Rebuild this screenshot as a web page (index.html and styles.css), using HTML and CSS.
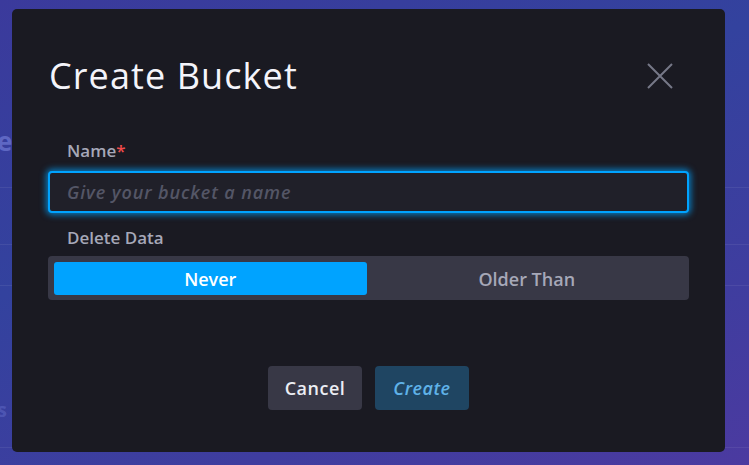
FILE: index.html
```html
<!DOCTYPE html>
<html lang="en">
<head>
<meta charset="UTF-8">
<meta name="viewport" content="width=device-width, initial-scale=1.0">
<title>Create Bucket</title>
<link rel="stylesheet" href="styles.css">
</head>
<body>
  <!-- faded page behind the overlay -->
  <div class="backdrop">
    <div class="bg-row bg-row-first"><span class="bg-text">e</span></div>
    <div class="bg-row bg-row-short"></div>
    <div class="bg-row bg-row-tall"><span class="bg-text bg-text-low">s</span></div>
  </div>

  <div class="overlay">
    <div class="modal">
      <div class="modal-header">
        <h1>Create Bucket</h1>
        <button class="close-button" aria-label="Close">
          <svg width="26" height="26" viewBox="0 0 26 26">
            <path d="M1 1 L25 25 M25 1 L1 25" stroke="#767888" stroke-width="2" fill="none"/>
          </svg>
        </button>
      </div>

      <div class="form">
        <label class="field-label">Name<span class="required">*</span></label>
        <input class="text-input" type="text" placeholder="Give your bucket a name">

        <label class="field-label field-label-second">Delete Data</label>
        <div class="toggle">
          <div class="toggle-option toggle-active">Never</div>
          <div class="toggle-option">Older Than</div>
        </div>
      </div>

      <div class="modal-footer">
        <button class="button button-default">Cancel</button>
        <button class="button button-primary">Create</button>
      </div>
    </div>
  </div>
</body>
</html>
```

FILE: styles.css
```css
html {
  overflow: hidden;
}
body {
  margin: 0;
  padding: 0;
  width: 749px;
  height: 465px;
  overflow: hidden;
  font-family: "Open Sans", Roboto, sans-serif;
  background: linear-gradient(160deg, #3b3a9c 0%, #33429e 40%, #3f3d9f 75%, #4b3aa0 100%);
  position: relative;
}
.backdrop {
  display: flex;
  flex-direction: column;
  padding-top: 187px;
}
.bg-row {
  border-top: 1px solid rgba(255, 255, 255, 0.07);
  position: relative;
}
.bg-row-first {
  height: 56px;
}
.bg-row-short {
  height: 40px;
}
.bg-row-tall {
  height: 161px;
  border-bottom: 1px solid rgba(255, 255, 255, 0.07);
}
.bg-text {
  position: absolute;
  left: -3px;
  top: -62px;
  font-size: 26px;
  font-weight: bold;
  line-height: 30px;
  color: rgba(130, 140, 230, 0.55);
}
.bg-text-low {
  top: 112px;
  font-size: 20px;
  line-height: 24px;
  color: rgba(130, 140, 230, 0.3);
}
.overlay {
  position: absolute;
  top: 0;
  left: 0;
  width: 749px;
  height: 465px;
}
.modal {
  margin: 9px 0 0 12px;
  width: 713px;
  height: 443px;
  box-sizing: border-box;
  padding: 0 36px;
  background-color: #1a1a22;
  border-radius: 5px;
  display: flex;
  flex-direction: column;
}
.modal-header {
  display: flex;
  align-items: center;
  justify-content: space-between;
  height: 42px;
  margin-top: 46px;
}
h1 {
  margin: 0 0 0 1px;
  font-size: 36px;
  font-weight: normal;
  line-height: 42px;
  letter-spacing: 1.1px;
  color: #f4f4fa;
}
.close-button {
  background: none;
  border: 0;
  padding: 0;
  margin-right: 16px;
  width: 26px;
  height: 26px;
  cursor: pointer;
}
.form {
  display: flex;
  flex-direction: column;
  margin-top: 44px;
}
.field-label {
  font-size: 17px;
  font-weight: 600;
  color: #a6a8b8;
  padding-left: 19px;
  line-height: 20px;
}
.field-label-second {
  margin-top: 15px;
}
.required {
  color: #f04b4b;
}
.text-input {
  margin-top: 10px;
  height: 42px;
  box-sizing: border-box;
  border: 2px solid #00a3ff;
  border-radius: 4px;
  background-color: #202029;
  box-shadow: 0 0 6px 2px rgba(0, 163, 255, 0.7);
  padding: 0 17px;
  font-family: inherit;
  font-size: 18px;
  letter-spacing: 0.9px;
  color: #e0e0ea;
  outline: none;
}
.text-input::placeholder {
  color: #545666;
  font-style: italic;
  font-weight: 600;
}
.toggle {
  margin-top: 8px;
  height: 44px;
  box-sizing: border-box;
  background-color: #383846;
  border-radius: 4px;
  padding: 6px 6px 5px;
  display: flex;
  gap: 4px;
}
.toggle-option {
  flex: 1;
  display: flex;
  align-items: center;
  justify-content: center;
  border-radius: 3px;
  font-size: 18px;
  font-weight: 600;
  color: #a6a8b8;
}
.toggle-active {
  background-color: #00a3ff;
  color: #fff;
}
.modal-footer {
  display: flex;
  justify-content: center;
  gap: 13px;
  margin-top: 66px;
}
.button {
  height: 44px;
  width: 94px;
  border: 0;
  border-radius: 4px;
  font-family: inherit;
  font-size: 18px;
  font-weight: 600;
  letter-spacing: 0.5px;
  cursor: pointer;
}
.button-default {
  background-color: #383846;
  color: #eceef4;
}
.button-primary {
  background-color: #1f4562;
  color: #5fb2e8;
  font-style: italic;
}
```
